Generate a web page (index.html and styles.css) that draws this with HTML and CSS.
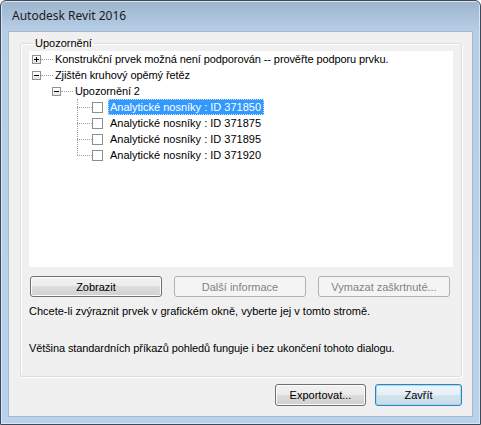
FILE: index.html
```html
<!DOCTYPE html>
<html lang="cs">
<head>
<meta charset="utf-8">
<title>Autodesk Revit 2016</title>
<link rel="stylesheet" href="styles.css">
</head>
<body>
<div class="window">
  <div class="titlebar"><span class="title">Autodesk Revit 2016</span></div>
  <div class="client">
    <fieldset class="group">
      <legend class="legend">Upozornění</legend>
      <div class="tree">
        <div class="row l1">
          <span class="exp plus"></span><span class="conn"></span><span class="label">Konstrukční prvek možná není podporován -- prověřte podporu prvku.</span>
        </div>
        <div class="row l1">
          <span class="exp minus"></span><span class="conn"></span><span class="label">Zjištěn kruhový opěmý řetěz</span>
        </div>
        <div class="row l2">
          <span class="exp minus"></span><span class="conn"></span><span class="label">Upozornění 2</span>
        </div>
        <div class="kids">
          <div class="row l3">
            <span class="conn3"></span><span class="chk"></span><span class="label sel">Analytické nosníky : ID 371850</span>
          </div>
          <div class="row l3">
            <span class="conn3"></span><span class="chk"></span><span class="label">Analytické nosníky : ID 371875</span>
          </div>
          <div class="row l3">
            <span class="conn3"></span><span class="chk"></span><span class="label">Analytické nosníky : ID 371895</span>
          </div>
          <div class="row l3">
            <span class="conn3"></span><span class="chk"></span><span class="label">Analytické nosníky : ID 371920</span>
          </div>
        </div>
      </div>
      <div class="btnrow">
        <button class="btn">Zobrazit</button>
        <button class="btn disabled">Další informace</button>
        <button class="btn disabled">Vymazat zaškrtnuté...</button>
      </div>
      <p class="hint first">Chcete-li zvýraznit prvek v grafickém okně, vyberte jej v tomto stromě.</p>
      <p class="hint second">Většina standardních příkazů pohledů funguje i bez ukončení tohoto dialogu.</p>
    </fieldset>
    <div class="footer">
      <button class="btn export">Exportovat...</button>
      <button class="btn default close">Zavřít</button>
    </div>
  </div>
</div>
</body>
</html>
```

FILE: styles.css
```css
* { box-sizing: border-box; }
html, body { margin: 0; padding: 0; background: #ffffff; }
body { width: 481px; height: 425px; overflow: hidden; font-family: "Liberation Sans", Arial, sans-serif; font-size: 11px; color: #000; }

.window {
  width: 481px;
  height: 425px;
  border: 1px solid #3e4a57;
  border-radius: 6px 6px 0 0;
  background: linear-gradient(to bottom, #9db4cc 0px, #a9c0d9 14px, #b7cee7 30px, #bad2eb 100%);
  box-shadow: inset 0 0 0 1px #d9e6f3;
  padding: 0 7px 7px 7px;
  display: flex;
  flex-direction: column;
}

.titlebar {
  height: 30px;
  display: flex;
  align-items: center;
  padding-left: 4px;
  padding-bottom: 2px;
}
.title {
  font-family: "Noto Sans", "Open Sans", sans-serif;
  font-size: 12px;
  color: #1b1b1b;
}

.client {
  flex: 1;
  background: #f0f0f0;
  border: 1px solid #a6b8cb;
  padding: 4px 10px 0 11px;
  display: flex;
  flex-direction: column;
}

.group {
  margin: 0;
  border: 1px solid #d5dfe5;
  border-radius: 3px;
  box-shadow: inset 1px 1px 0 #ffffff, 1px 1px 0 #ffffff;
  padding: 0 8px 21px 8px;
  height: 341px;
  min-width: 0;
}
.legend {
  margin-left: 4px;
  padding: 0 2px;
  line-height: 14px;
  font-size: 11px;
  color: #000;
}

.tree {
  margin-top: 1px;
  height: 216px;
  background: #ffffff;
  position: relative;
}
.row {
  height: 16px;
  display: flex;
  align-items: center;
  white-space: nowrap;
}
.l1 { padding-left: 3px; }
.l2 { padding-left: 23px; }
.l3 { padding-left: 48px; }

.exp {
  width: 9px;
  height: 9px;
  border: 1px solid #919191;
  background: linear-gradient(to bottom, #ffffff, #e4e4e4);
  position: relative;
  flex: none;
}
.exp::before {
  content: "";
  position: absolute;
  left: 1px; top: 3px;
  width: 5px; height: 1px;
  background: #000;
}
.plus::after {
  content: "";
  position: absolute;
  left: 3px; top: 1px;
  width: 1px; height: 5px;
  background: #000;
}
.conn {
  width: 12px;
  height: 1px;
  border-top: 1px dotted #a0a0a0;
  flex: none;
}
.label {
  margin-left: 1px;
  padding: 0 2px 0 1px;
  line-height: 16px;
  height: 16px;
  letter-spacing: -0.1px;
}

.kids { position: relative; }
.kids::before {
  content: "";
  position: absolute;
  left: 48px;
  top: 0;
  bottom: 8px;
  border-left: 1px dotted #a0a0a0;
}
.conn3 {
  width: 15px;
  height: 1px;
  border-top: 1px dotted #a0a0a0;
  flex: none;
}
.chk {
  width: 11px;
  height: 11px;
  border: 1px solid #8f8f8f;
  background: #ffffff;
  flex: none;
}
.l3 .label { margin-left: 5px; padding-left: 2px; letter-spacing: 0; }
.sel {
  background: #3399ff;
  color: #ffffff;
  outline: 1px dotted #c8e0ff;
  outline-offset: -1px;
  padding-right: 3px;
}

.btnrow {
  margin-top: 9px;
  margin-left: 1px;
  display: flex;
  gap: 12px;
}
.btn {
  font-family: "Liberation Sans", Arial, sans-serif;
  font-size: 11px;
  color: #000;
  height: 21px;
  width: 132px;
  padding: 0;
  border: 1px solid #707070;
  border-radius: 3px;
  background: linear-gradient(to bottom, #f2f2f2 0%, #ebebeb 50%, #dddddd 50%, #cfcfcf 100%);
  box-shadow: inset 0 0 0 1px #fcfcfc;
}
.btn.disabled {
  border-color: #adb2b5;
  background: #f4f4f4;
  color: #838383;
  box-shadow: none;
}

.hint { margin: 0; line-height: 14px; padding-left: 0; }
.hint.first { margin-top: 7px; }
.hint.second { margin-top: 23px; letter-spacing: -0.1px; }

.footer {
  margin-top: 7px;
  display: flex;
  justify-content: flex-end;
  gap: 9px;
}
.footer .btn { height: 22px; }
.export { width: 91px; }
.close { width: 87px; }
.btn.default {
  border-color: #3c7fb1;
  box-shadow: inset 0 0 0 1px #9fdcf7;
  background: linear-gradient(to bottom, #eef6fb 0%, #e4eff6 50%, #d4e3ee 50%, #c9dbe8 100%);
}
```
